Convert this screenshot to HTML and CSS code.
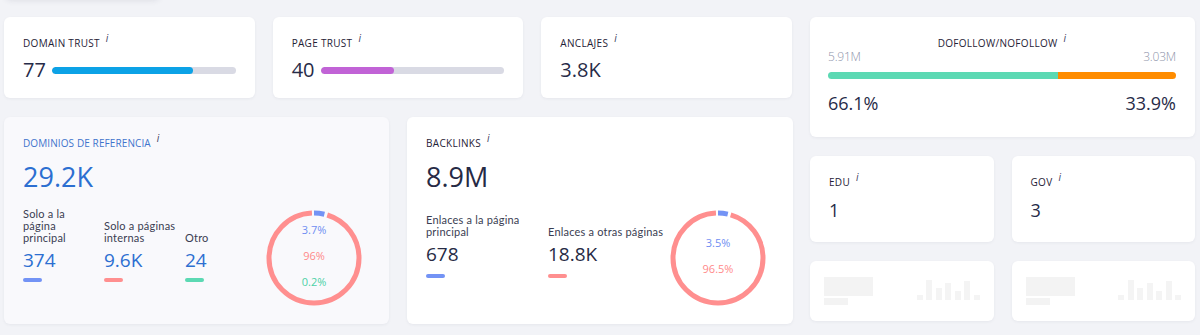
FILE: index.html
```html
<!DOCTYPE html>
<html lang="es">
<head>
<meta charset="utf-8">
<title>Backlinks overview</title>
<link rel="stylesheet" href="styles.css">
</head>
<body>
<div class="stub"></div>
<div class="page">
  <div class="left">
    <div class="row1">
      <div class="card small">
        <div class="title">DOMAIN TRUST<span class="info">i</span></div>
        <div class="metric">
          <span class="num">77</span>
          <div class="track"><div class="fill fill-dt" style="width:77%"></div></div>
        </div>
      </div>
      <div class="card small">
        <div class="title">PAGE TRUST<span class="info">i</span></div>
        <div class="metric">
          <span class="num">40</span>
          <div class="track"><div class="fill fill-pt" style="width:40%"></div></div>
        </div>
      </div>
      <div class="card small">
        <div class="title">ANCLAJES<span class="info">i</span></div>
        <div class="metric">
          <span class="num">3.8K</span>
        </div>
      </div>
    </div>
    <div class="row2">
      <div class="card big tinted">
        <div class="title blue">DOMINIOS DE REFERENCIA<span class="info">i</span></div>
        <div class="bignum blue-num">29.2K</div>
        <div class="split">
          <div class="subs subs-rd">
            <div class="col col-rd">
              <div class="label">Solo a la<br>página<br>principal</div>
              <div class="subnum blue-num">374</div>
              <div class="mini mini-blue"></div>
            </div>
            <div class="col col-rd">
              <div class="label">Solo a páginas<br>internas</div>
              <div class="subnum blue-num">9.6K</div>
              <div class="mini mini-red"></div>
            </div>
            <div class="col col-rd">
              <div class="label">Otro</div>
              <div class="subnum blue-num">24</div>
              <div class="mini mini-green"></div>
            </div>
          </div>
          <svg class="donut" width="96" height="96" viewBox="0 0 96 96">
            <g transform="rotate(-90 48 48)">
              <circle cx="48" cy="48" r="45" fill="none" stroke="#7393f5" stroke-width="5" stroke-dasharray="10.5 272.24" stroke-dashoffset="0"/>
              <circle cx="48" cy="48" r="45" fill="none" stroke="#ff8f8f" stroke-width="5" stroke-dasharray="266.7 16.04" stroke-dashoffset="-13.5"/>
            </g>
            <text x="48" y="19" class="dl dl-blue">3.7%</text>
            <text x="48" y="45" class="dl dl-red">96%</text>
            <text x="48" y="71" class="dl dl-green">0.2%</text>
          </svg>
        </div>
      </div>
      <div class="card big">
        <div class="title">BACKLINKS<span class="info">i</span></div>
        <div class="bignum">8.9M</div>
        <div class="split">
          <div class="subs subs-bl">
            <div class="col col-bl">
              <div class="label">Enlaces a la página<br>principal</div>
              <div class="subnum">678</div>
              <div class="mini mini-blue mini-bl"></div>
            </div>
            <div class="col col-bl">
              <div class="label">Enlaces a otras páginas</div>
              <div class="subnum">18.8K</div>
              <div class="mini mini-red mini-bl"></div>
            </div>
          </div>
          <svg class="donut" width="96" height="96" viewBox="0 0 96 96">
            <g transform="rotate(-90 48 48)">
              <circle cx="48" cy="48" r="45" fill="none" stroke="#7393f5" stroke-width="5" stroke-dasharray="9.9 272.84" stroke-dashoffset="0"/>
              <circle cx="48" cy="48" r="45" fill="none" stroke="#ff8f8f" stroke-width="5" stroke-dasharray="267.3 15.44" stroke-dashoffset="-12.9"/>
            </g>
            <text x="48" y="32" class="dl dl-blue">3.5%</text>
            <text x="48" y="58" class="dl dl-red">96.5%</text>
          </svg>
        </div>
      </div>
    </div>
  </div>
  <div class="right">
    <div class="card follow">
      <div class="title center">DOFOLLOW/NOFOLLOW<span class="info">i</span></div>
      <div class="ends light"><span>5.91M</span><span>3.03M</span></div>
      <div class="splitbar"><div class="seg-do" style="width:66.1%"></div><div class="seg-no"></div></div>
      <div class="ends pct"><span>66.1%</span><span>33.9%</span></div>
    </div>
    <div class="pair">
      <div class="card tld">
        <div class="title">EDU<span class="info">i</span></div>
        <div class="tldnum">1</div>
      </div>
      <div class="card tld">
        <div class="title">GOV<span class="info">i</span></div>
        <div class="tldnum">3</div>
      </div>
    </div>
    <div class="pair">
      <div class="card ph">
        <div class="ph-text"><div class="ph-a"></div><div class="ph-b"></div></div>
        <div class="ph-bars">
          <span style="height:5px"></span><span style="height:20px"></span><span style="height:12px"></span><span style="height:17px"></span><span style="height:9px"></span><span style="height:19px"></span><span style="height:5px"></span>
        </div>
      </div>
      <div class="card ph">
        <div class="ph-text"><div class="ph-a"></div><div class="ph-b"></div></div>
        <div class="ph-bars">
          <span style="height:5px"></span><span style="height:20px"></span><span style="height:12px"></span><span style="height:17px"></span><span style="height:9px"></span><span style="height:19px"></span><span style="height:5px"></span>
        </div>
      </div>
    </div>
  </div>
</div>
</body>
</html>
```
FILE: styles.css
```css
* { box-sizing: border-box; }
html, body { margin: 0; padding: 0; }
body {
  background: #f2f3f7;
  font-family: "Open Sans", "Noto Sans", sans-serif;
  color: #272b45;
  width: 1200px;
  height: 335px;
  overflow: hidden;
}
.stub {
  width: 155px;
  height: 30px;
  margin: -31px 0 0 5px;
  background: #ffffff;
  border-radius: 6px;
  box-shadow: 0 1px 6px rgba(40, 45, 70, 0.12);
}
.page {
  display: flex;
  gap: 18px;
  padding: 18px 5px 0 4px;
}
.left { width: 788px; display: flex; flex-direction: column; gap: 19px; }
.right { width: 385px; display: flex; flex-direction: column; gap: 19px; }
.row1 { display: flex; gap: 18px; }
.row2 { display: flex; gap: 18px; }
.card {
  background: #ffffff;
  border-radius: 6px;
  box-shadow: 0 1px 3px rgba(40, 45, 70, 0.06);
}
.small { flex: 1; height: 81px; padding: 19px 19px 0 19px; }
.title {
  font-size: 10px;
  line-height: 14px;
  color: #1f2236;
  letter-spacing: 0.3px;
  white-space: nowrap;
}
.title.blue { color: #3f74cc; letter-spacing: 0.1px; }
.title.center { text-align: center; }
.info {
  font-style: italic;
  font-size: 10px;
  color: #3b4060;
  margin-left: 6px;
  position: relative;
  top: -5px;
}
.metric { display: flex; align-items: center; margin-top: 8px; height: 24px; }
.num { font-size: 20px; line-height: 24px; color: #272b48; }
.track {
  flex: 1;
  height: 7px;
  margin-left: 6px;
  background: #d9dae4;
  border-radius: 4px;
  overflow: hidden;
}
.fill { height: 100%; border-radius: 4px; }
.fill-dt { background: #0ca2e6; }
.fill-pt { background: #c163d6; }

.big { flex: 1; height: 207px; padding: 19px 27px 0 19px; }
.tinted { background: #f9f9fc; }
.bignum { font-size: 27px; line-height: 36px; margin-top: 9px; color: #262a45; }
.split { display: flex; justify-content: space-between; align-items: flex-start; margin-top: 15px; }
.subs { display: flex; align-items: flex-end; }
.subs-rd { margin-top: -2px; }
.subs-bl { margin-top: 4px; }
.col-rd { width: 81px; }
.col-bl { width: 122px; }
.label {
  font-family: Lato, "Open Sans", sans-serif;
  font-size: 11px;
  line-height: 12px;
  color: #3a3d52;
  letter-spacing: 0.2px;
  white-space: nowrap;
}
.subnum { font-size: 19px; line-height: 24px; margin-top: 4px; color: #272b45; }
.blue-num { color: #2c6fd1; }
.mini { width: 19px; height: 4px; border-radius: 2px; margin-top: 6px; }
.mini-bl { margin-top: 8px; }
.mini-blue { background: #7393f5; }
.mini-red { background: #ff8f8f; }
.mini-green { background: #5cd9b3; }
.donut { flex: none; display: block; }
.dl {
  font-family: "Open Sans", sans-serif;
  font-size: 11px;
  text-anchor: middle;
  dominant-baseline: central;
}
.dl-blue { fill: #6f8ef2; }
.dl-red { fill: #ff8a8a; }
.dl-green { fill: #4dd1a6; }

.follow { height: 120px; padding: 19px 19px 0 18px; }
.ends { display: flex; justify-content: space-between; }
.light { font-size: 12px; line-height: 14px; color: #8e94aa; font-weight: 300; letter-spacing: -0.2px; }
.pct { font-size: 18px; line-height: 24px; margin-top: 12px; color: #272b48; }
.splitbar { display: flex; height: 7px; margin-top: 8px; border-radius: 4px; overflow: hidden; }
.seg-do { background: #5cd9b3; }
.seg-no { flex: 1; background: #ff8c00; }

.pair { display: flex; gap: 18px; }
.tld { flex: 1; height: 86px; padding: 19px 19px 0 19px; }
.tldnum { font-size: 18px; line-height: 24px; margin-top: 9px; color: #272b48; }

.ph {
  flex: 1;
  height: 60px;
  padding: 16px 14px 0 14px;
  display: flex;
  justify-content: space-between;
  align-items: flex-start;
}
.ph-a { width: 49px; height: 19px; background: #f3f3f3; }
.ph-b { width: 24px; height: 7px; margin-top: 2px; background: #f3f3f3; }
.ph-bars { display: flex; align-items: flex-end; gap: 3.5px; height: 23px; }
.ph-bars span { display: block; width: 6px; background: #f4f4f4; }
```
